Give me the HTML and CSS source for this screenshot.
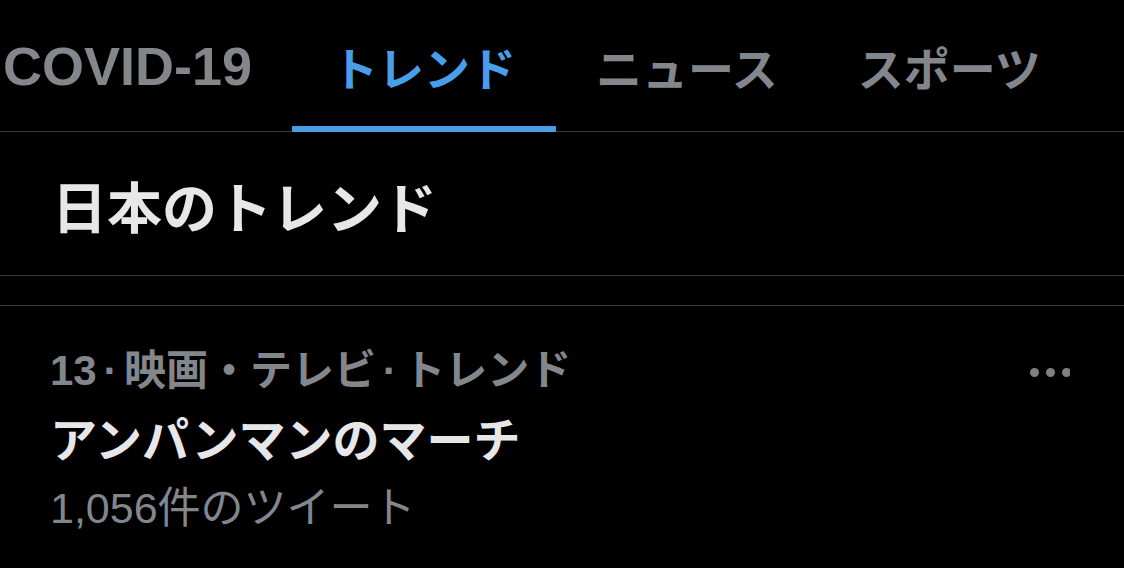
FILE: index.html
```html
<!DOCTYPE html>
<html lang="ja">
<head>
  <meta charset="UTF-8" />
  <meta name="viewport" content="width=device-width, initial-scale=1.0"/>
  <title>トレンド</title>
  <link rel="stylesheet" href="styles.css">
</head>
<body>
  <nav class="tabs">
    <div class="tab tab-latin">COVID-19</div>
    <div class="tab active">トレンド</div>
    <div class="tab">ニュース</div>
    <div class="tab">スポーツ</div>
  </nav>

  <div class="section-title">日本のトレンド</div>
  <div class="spacer"></div>

  <div class="trend">
    <div class="trend-body">
      <div class="trend-meta">13 · 映画・テレビ · トレンド</div>
      <div class="trend-name">アンパンマンのマーチ</div>
      <div class="trend-count">1,056件のツイート</div>
    </div>
    <svg class="more" width="40" height="9" viewBox="0 0 40 9">
      <circle cx="4.5" cy="4.5" r="4.5"/>
      <circle cx="20.5" cy="4.5" r="4.5"/>
      <circle cx="36.5" cy="4.5" r="4.5"/>
    </svg>
  </div>
</body>
</html>
```

FILE: styles.css
```css
* { box-sizing: border-box; }
body {
  margin: 0;
  background: #000;
  color: #e7e7e7;
  font-family: 'Liberation Sans', 'Noto Sans CJK JP', sans-serif;
  overflow: hidden;
}

.tabs {
  display: flex;
  height: 132px;
  margin-left: -37px;
  border-bottom: 1px solid #38393b;
}

.tab {
  position: relative;
  display: flex;
  align-items: center;
  padding: 0 40px;
  font-size: 46px;
  font-weight: bold;
  color: #83878c;
  white-space: nowrap;
}

.tab-latin { font-size: 54px; }

.tab.active { color: #4a9ee9; }

.tab.active::after {
  content: '';
  position: absolute;
  left: 0;
  right: 0;
  bottom: -1px;
  height: 6px;
  background: #4a9ee9;
  border-radius: 1px;
}

.section-title {
  display: flex;
  align-items: center;
  height: 144px;
  padding: 0 52px;
  font-size: 55px;
  font-weight: bold;
  border-bottom: 1px solid #38393b;
}

.spacer {
  height: 30px;
  border-bottom: 1px solid #38393b;
}

.trend {
  display: flex;
  justify-content: space-between;
  align-items: flex-start;
  padding: 40px 54px 0 50px;
}

.trend-meta {
  font-size: 42px;
  font-weight: bold;
  line-height: 50px;
  word-spacing: -5px;
  color: #83878c;
}

.trend-name {
  font-size: 47px;
  font-weight: bold;
  line-height: 90px;
}

.trend-count {
  font-size: 43px;
  line-height: 44px;
  color: #83878c;
}

.more {
  margin-top: 22px;
  fill: #7c7f83;
}
```
